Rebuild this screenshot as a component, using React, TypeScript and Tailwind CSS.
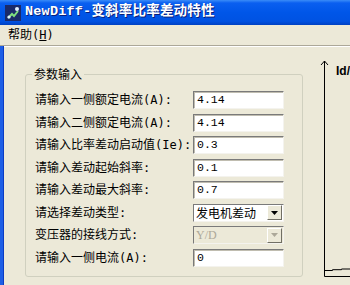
import React from 'react';

const cjk = "font-['Noto_Sans_CJK_SC',sans-serif]";
const mixed = "font-['DejaVu_Sans_Mono','Noto_Sans_CJK_SC',monospace]";

function Edit({ value, disabled }: { value: string; disabled?: boolean }) {
  return (
    <div
      className={`h-[18px] w-[91px] flex items-center pl-[3px] border border-t-[#7a7a7a] border-l-[#7a7a7a] border-b-[#f4f3ee] border-r-[#f4f3ee] shadow-[inset_1px_1px_0_#c0bdb0] font-['Liberation_Mono',monospace] text-[11.5px] ${disabled ? 'bg-[#ece9d8] text-[#aca899]' : 'bg-white text-black'}`}
    >
      {value}
    </div>
  );
}

function Combo({ value, disabled }: { value: string; disabled?: boolean }) {
  return (
    <div
      className={`h-[18px] w-[91px] flex items-center border border-t-[#7a7a7a] border-l-[#7a7a7a] border-b-[#f4f3ee] border-r-[#f4f3ee] ${disabled ? 'bg-[#ece9d8] text-[#aca899]' : 'bg-white text-black'}`}
    >
      <span className={`flex-1 pl-[2px] text-[12px] leading-none ${disabled ? "font-['Liberation_Serif',serif]" : cjk}`}>{value}</span>
      <span className="h-[15px] w-[15px] mr-[1px] flex items-center justify-center bg-[#ece9d8] border border-t-white border-l-white border-b-[#716f64] border-r-[#716f64]">
        <svg width="7" height="4" viewBox="0 0 7 4">
          <path d="M0 0h7L3.5 4z" fill={disabled ? '#aca899' : '#000'} />
        </svg>
      </span>
    </div>
  );
}

const rows: { label: string; value: string; kind: 'edit' | 'combo'; disabled?: boolean }[] = [
  { label: '请输入一侧额定电流(A):', value: '4.14', kind: 'edit' },
  { label: '请输入二侧额定电流(A):', value: '4.14', kind: 'edit' },
  { label: '请输入比率差动启动值(Ie):', value: '0.3', kind: 'edit' },
  { label: '请输入差动起始斜率:', value: '0.1', kind: 'edit' },
  { label: '请输入差动最大斜率:', value: '0.7', kind: 'edit' },
  { label: '请选择差动类型:', value: '发电机差动', kind: 'combo' },
  { label: '变压器的接线方式:', value: 'Y/D', kind: 'combo', disabled: true },
  { label: '请输入一侧电流(A):', value: '0', kind: 'edit' },
];

export default function App() {
  return (
    <div className={`w-[350px] h-[285px] overflow-hidden bg-[#ece9d8] flex flex-col ${cjk}`}>
      {/* title bar */}
      <div className="h-[25px] shrink-0 flex items-center pl-[5px] gap-[4px] bg-[linear-gradient(to_bottom,#3a8cf8_0%,#0a5ff0_12%,#0056e8_50%,#0052e2_85%,#0041c2_100%)]">
        <svg width="16" height="16" viewBox="0 0 16 16">
          <rect x="0" y="0" width="16" height="16" fill="#1a2a6a" />
          <path d="M3 13l4-4 2 2 4-5" stroke="#7fe07f" strokeWidth="2" fill="none" />
          <circle cx="12" cy="4" r="2" fill="#e0f0ff" />
          <circle cx="4" cy="12" r="1.6" fill="#e0f0ff" />
        </svg>
        <span className="text-[13.5px] font-bold text-white [text-shadow:1px_1px_0_#0a1f7a] font-['Liberation_Mono','Noto_Sans_CJK_SC',monospace] tracking-[0.2px]">
          NewDiff-变斜率比率差动特性
        </span>
      </div>

      {/* menu bar */}
      <div className={`h-[21px] shrink-0 flex items-center pl-[8px] text-[12px] text-black border-b border-[#aca899] shadow-[0_1px_0_#fff] ${mixed}`}>
        帮助<span>(<span className="underline">H</span>)</span>
      </div>

      <div className="flex-1 flex min-h-0">
        {/* window left frame */}
        <div className="w-[4px] shrink-0 bg-[#1d5fe6] border-r border-[#0a3cc4]" />

        <div className="flex-1 flex pt-[28px] pl-[21px]">
          {/* group box */}
          <div className="relative w-[278px] h-[203px] border border-[#d0d0bf] rounded-[3px] pt-[16px] pl-[9px]">
            <span className="absolute -top-[9px] left-[6px] px-[2px] bg-[#ece9d8] text-[12px] leading-[16px] text-black">参数输入</span>
            <div className="flex flex-col gap-[4.5px]">
              {rows.map((r) => (
                <div key={r.label} className="flex items-center h-[18px]">
                  <span className={`w-[158px] shrink-0 overflow-hidden text-[12px] text-black whitespace-nowrap ${mixed}`}>{r.label}</span>
                  {r.kind === 'edit' ? (
                    <Edit value={r.value} disabled={r.disabled} />
                  ) : (
                    <Combo value={r.value} disabled={r.disabled} />
                  )}
                </div>
              ))}
            </div>
          </div>

          {/* chart */}
          <div className="relative flex-1">
            <svg width="47" height="237" viewBox="0 0 47 237" className="absolute left-0 top-[-28px]">
              <line x1="21.5" y1="15" x2="21.5" y2="230.5" stroke="#000" />
              <line x1="21.5" y1="230.5" x2="47" y2="230.5" stroke="#000" />
              <path d="M18 19l3.5-4 3.5 4" stroke="#000" fill="none" />
              <path d="M22 224.5h7.5v-0.8h9v-0.7h8.5" stroke="#000" fill="none" />
              <text x="33" y="29" fontSize="12" fontWeight="bold" fontFamily="Liberation Sans, Arial, sans-serif" fill="#000">Id/</text>
            </svg>
          </div>
        </div>
      </div>
    </div>
  );
}
